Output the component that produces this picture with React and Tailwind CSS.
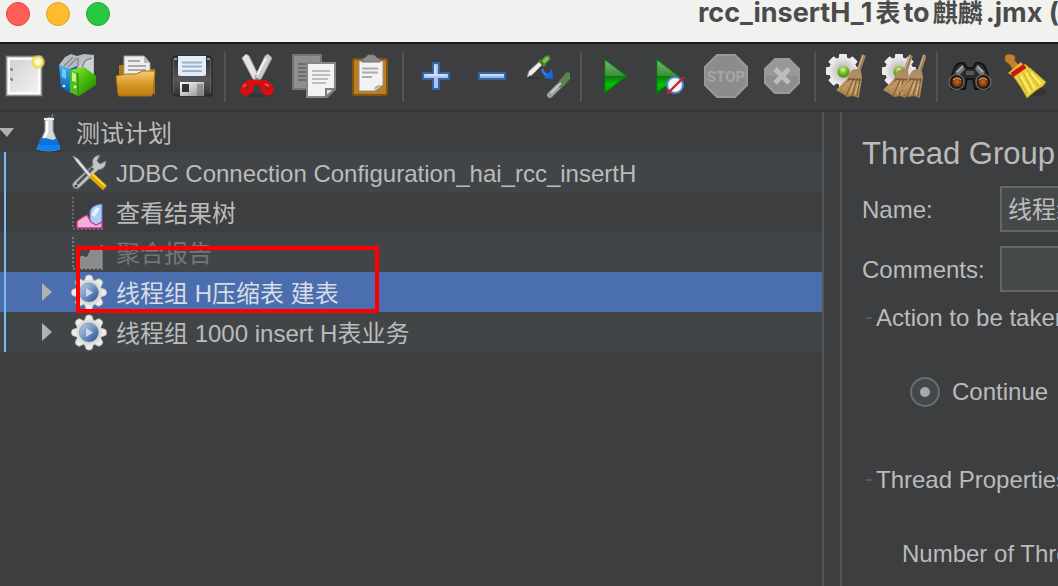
import React from "react";

const GEAR_TEETH = [0, 45, 90, 135, 180, 225, 270, 315];

function Svg({ size = 44, children }) {
  return (
    <svg width={size} height={size} viewBox={`0 0 ${size} ${size}`} aria-hidden="true" className="block shrink-0">
      {children}
    </svg>
  );
}

function Gradients() {
  return (
    <svg width="0" height="0" className="absolute" aria-hidden="true">
      <defs>
        <linearGradient id="paper" x1="0" y1="0" x2="1" y2="1">
          <stop offset="0" stopColor="#d2d2d2" />
          <stop offset="1" stopColor="#f2f2f2" />
        </linearGradient>
        <linearGradient id="gold" x1="0" y1="0" x2="0" y2="1">
          <stop offset="0" stopColor="#f3cc72" />
          <stop offset="0.5" stopColor="#d99b2c" />
          <stop offset="1" stopColor="#bd7a0a" />
        </linearGradient>
        <linearGradient id="disk" x1="0" y1="0" x2="0" y2="1">
          <stop offset="0" stopColor="#2e2e30" />
          <stop offset="0.6" stopColor="#58585a" />
          <stop offset="1" stopColor="#303032" />
        </linearGradient>
        <linearGradient id="metal" x1="0" y1="0" x2="1" y2="1">
          <stop offset="0" stopColor="#ffffff" />
          <stop offset="1" stopColor="#8c8c88" />
        </linearGradient>
        <linearGradient id="play" x1="0" y1="0" x2="0" y2="1">
          <stop offset="0" stopColor="#7ab87a" />
          <stop offset="0.48" stopColor="#3c8f3c" />
          <stop offset="0.5" stopColor="#0a7a0a" />
          <stop offset="0.75" stopColor="#04c404" />
          <stop offset="1" stopColor="#089208" />
        </linearGradient>
        <linearGradient id="straw" x1="0" y1="0" x2="0" y2="1">
          <stop offset="0" stopColor="#a88a68" />
          <stop offset="0.6" stopColor="#be955e" />
          <stop offset="1" stopColor="#a27b49" />
        </linearGradient>
        <radialGradient id="gear">
          <stop offset="0" stopColor="#a8a8a8" />
          <stop offset="0.6" stopColor="#d2d2d2" />
          <stop offset="1" stopColor="#ececec" />
        </radialGradient>
        <radialGradient id="greenBall" cx="0.45" cy="0.3">
          <stop offset="0" stopColor="#dcf5a6" />
          <stop offset="0.6" stopColor="#7fc32c" />
          <stop offset="1" stopColor="#5a9a1c" />
        </radialGradient>
        <linearGradient id="blueBall" x1="0" y1="0" x2="1" y2="1">
          <stop offset="0" stopColor="#c4d4e8" />
          <stop offset="0.5" stopColor="#6f93c6" />
          <stop offset="1" stopColor="#1d4684" />
        </linearGradient>
        <radialGradient id="lens">
          <stop offset="0" stopColor="#c26a2c" />
          <stop offset="0.6" stopColor="#8a4010" />
          <stop offset="1" stopColor="#2c1408" />
        </radialGradient>
        <linearGradient id="greenBook" x1="0" y1="0" x2="1" y2="1">
          <stop offset="0" stopColor="#9bec3a" />
          <stop offset="0.5" stopColor="#48bc0c" />
          <stop offset="1" stopColor="#1c7a00" />
        </linearGradient>
        <linearGradient id="blueBook" x1="0" y1="0" x2="0" y2="1">
          <stop offset="0" stopColor="#3fb0f5" />
          <stop offset="1" stopColor="#0c5fae" />
        </linearGradient>
        <radialGradient id="spark">
          <stop offset="0" stopColor="#ffffff" />
          <stop offset="0.4" stopColor="#fbf6b0" />
          <stop offset="0.75" stopColor="#e6d84a" stopOpacity="0.9" />
          <stop offset="1" stopColor="#e6d84a" stopOpacity="0" />
        </radialGradient>
      </defs>
    </svg>
  );
}

function NewIcon() {
  return (
    <Svg>
      <rect x="4.5" y="2.5" width="35" height="39" fill="#fdfdfd" stroke="#8d8d88" strokeWidth="1.6" />
      <rect x="8" y="6" width="28" height="32" fill="url(#paper)" />
      <path d="M8 15h2v2M8 25h2v2" stroke="#777" strokeWidth="1.5" fill="none" />
      <circle cx="36" cy="8" r="7.5" fill="url(#spark)" />
    </Svg>
  );
}

function TemplatesIcon() {
  return (
    <Svg>
      <path d="M1 11 7 3l6-3 6 2 7-2 10 1v22l-15 4L8 15z" fill="#b9bcbe" />
      <path d="m6 12 9-9m-5 10 9-9m1 10V4m4 10 9-11m-5 12 7-8" stroke="#8a8e91" strokeWidth="1.6" />
      <path d="m20 13 8-9 7-2v20l-10-6z" fill="#cfd2d4" />
      <path d="M24 13c2-7 5-8 10-9" stroke="#8d9296" strokeWidth="2" fill="none" />
      <path d="m1 11 11 4v24L3 33z" fill="url(#blueBook)" />
      <path d="m4 14 4 2v9l-4-2z" fill="#73c8f6" />
      <path d="m12 15 7-3v25l-7 3z" fill="#1160a0" />
      <circle cx="6" cy="32" r="1.3" fill="#d8f0ff" />
      <path d="m12 16 14-3 12 9v9L21 42l-9-4z" fill="url(#greenBook)" />
      <path d="m12 16 8 3v23l-8-4z" fill="#51be18" />
      <path d="m14 18 4 2v8l-4-1z" fill="#c4f789" />
      <path d="M20 19v22" stroke="#227d06" strokeWidth="1" />
      <circle cx="17" cy="33" r="1.4" fill="#d9ffc0" />
    </Svg>
  );
}

function OpenIcon() {
  return (
    <Svg>
      <path d="M5 11h9l3 4h24v25H5z" fill="#b0780f" />
      <path d="M10 2h20l6 7v14H10z" fill="#eeeeef" stroke="#a1a1a4" strokeWidth="1" />
      <path d="M30 2v7h6z" fill="#b8b8ba" />
      <path d="M14 7h12M14 12h18M14 16h18" stroke="#aaa" strokeWidth="2" />
      <path d="M2 22q12-3 20-2l7-3h12l-2 23-2 2H5l-1-2z" fill="url(#gold)" stroke="#a96f0d" strokeWidth="1" />
    </Svg>
  );
}

function SaveIcon() {
  return (
    <Svg>
      <path d="M4 2h36l2 2v38H5l-3-3V4z" fill="url(#disk)" stroke="#242426" strokeWidth="1" />
      <path d="M3.5 5v34M40.5 5v34" stroke="#5c5c5f" strokeWidth="1" />
      <path d="M8 2h28v18q0 2-2 2H10q-2 0-2-2z" fill="#e4eef7" />
      <path d="M12 8.500h20M12 12.500h20M12 17h20" stroke="#98b4d0" strokeWidth="1.8" />
      <rect x="10" y="28" width="24" height="14" fill="url(#metal)" />
      <rect x="12" y="30" width="7" height="8" fill="#343436" />
      <path d="M27 30h6v12h-6z" fill="#777" opacity=".6" />
      <path d="M4 4h3v2H4zM37 4h3v2h-3z" fill="#999" />
    </Svg>
  );
}

function CutIcon() {
  return (
    <Svg>
      <ellipse cx="21" cy="41" rx="14" ry="2" fill="#2c2d2e" opacity=".5" />
      <path d="m6 4 4-4 3 2 10 21-2 5-4-3z" fill="#e4e4e4" stroke="#a5a5a5" strokeWidth="1" />
      <path d="m36 4-4-4-3 2-10 21 2 5 4-3z" fill="#cccccd" stroke="#9c9c9c" strokeWidth="1" />
      <path d="m30 4-9 17" stroke="#f4f4f4" strokeWidth="2" />
      <g fill="none" stroke="#d90f0f" strokeWidth="5.5">
        <ellipse cx="11" cy="34.500" rx="3.500" ry="5" transform="rotate(38 11 34.5)" />
        <ellipse cx="31" cy="34.500" rx="3.500" ry="5" transform="rotate(-38 31 34.5)" />
        <path d="m11 29 10-1 10 1" />
      </g>
      <path d="m7 33 3-3m19 0 4 2" stroke="#ff5656" strokeWidth="1.5" />
      <circle cx="21" cy="25" r="1.3" fill="#777" />
    </Svg>
  );
}

function CopyIcon() {
  return (
    <Svg>
      <rect x="1" y="1" width="28" height="34" fill="#8e9090" stroke="#737575" strokeWidth="2" />
      <path d="M6 10h16M6 14h16M6 18h16M6 22h10M6 26h10" stroke="#6d6f6f" strokeWidth="1.8" />
      <path d="M15 9h28v26l-8 8H15z" fill="#f3f3f3" stroke="#858782" strokeWidth="2" />
      <path d="M20 17h18M20 21h18M20 25h16M20 29h14" stroke="#bdbdbd" strokeWidth="1.8" />
      <path d="M34 43v-8h9z" fill="#d9d9d9" stroke="#7b7d78" strokeWidth="2" />
    </Svg>
  );
}

function PasteIcon() {
  return (
    <Svg>
      <rect x="5" y="5" width="34" height="36" rx="1" fill="#bd7e22" stroke="#805315" strokeWidth="2" />
      <path d="M11 7h24v24l-8 6H11z" fill="#f2f2f2" stroke="#8f8f8b" strokeWidth="1" />
      <path d="M14 14.500h16M14 18.500h16M14 23h10" stroke="#acacac" strokeWidth="1.800" />
      <path d="M26 36q0-5 8-5z" fill="#aaa" />
      <path d="M14 8V6q0-2 3-2l3-3h6l3 3q3 0 3 2v2z" fill="#8d8d83" stroke="#72726a" strokeWidth="1" />
    </Svg>
  );
}

function PlusIcon() {
  return (
    <Svg>
      <path d="M19 9h6v10h10v6H25v10h-6V25H9v-6h10z" fill="#adc5e8" stroke="#3465a8" strokeWidth="2" />
      <path d="M20 11h2v11H11v-2h9zM22 22h11v-2H22z" fill="#d3e0f3" />
    </Svg>
  );
}

function MinusIcon() {
  return (
    <Svg>
      <path d="M9 19h26v6H9z" fill="#9ebbe3" stroke="#3465a8" strokeWidth="2" />
      <path d="M10 21h24" stroke="#cbdcf2" strokeWidth="2" />
    </Svg>
  );
}

function ToggleIcon() {
  return (
    <Svg>
      <path d="M3 24h10" stroke="#29292a" strokeWidth="1.500" opacity=".6" />
      <path d="m1 23 2-6L14 7l3 3L6 21z" fill="#efefeb" stroke="#8c8c88" strokeWidth="1" />
      <path d="m14 8 6-6 3 0 1 3-7 7z" fill="#80be60" stroke="#467b2c" strokeWidth="1.3" />
      <path d="m13 6 6 6" stroke="#42822b" strokeWidth="3" />
      <path d="M16 15q2 6 6 6" stroke="#387ce9" strokeWidth="2.400" fill="none" />
      <path d="m26 15 1 10-9-1z" fill="#1766f4" />
      <g opacity=".8">
        <path d="m24 41 12-12" stroke="#b4b6b5" strokeWidth="6" strokeLinecap="round" />
        <path d="m35 30 7-8" stroke="#659650" strokeWidth="7" strokeLinecap="round" />
        <path d="m25 39 10-10" stroke="#eee" strokeWidth="2" />
      </g>
    </Svg>
  );
}

function StartIcon() {
  return (
    <Svg>
      <path d="M12.500 5 35 22 12.500 39.500z" fill="url(#play)" stroke="#116b11" strokeWidth="1.500" />
    </Svg>
  );
}

function StartNoTimersIcon() {
  return (
    <Svg>
      <path d="M8.500 5 31 22 8.500 39.500z" fill="url(#play)" stroke="#116b11" strokeWidth="1.500" />
      <circle cx="27" cy="31" r="8" fill="#f1f4f8" stroke="#4c86c6" strokeWidth="2" />
      <path d="M19 40 36 23" stroke="#cf1f26" strokeWidth="2.400" />
    </Svg>
  );
}

function StopIcon() {
  return (
    <Svg>
      <path d="M13 1h18l12 12v18L31 43H13L1 31V13z" fill="#8c8c8c" stroke="#999" strokeWidth="2" />
      <text x="22" y="28" textAnchor="middle" fill="#a6a6a6" fontSize="15" fontWeight="700" fontFamily="Roboto, sans-serif">
        STOP
      </text>
    </Svg>
  );
}

function ShutdownIcon() {
  return (
    <Svg>
      <path d="M15 5h14l10 10v14L29 39H15L5 29V15z" fill="#8e8e8e" stroke="#9a9a9a" strokeWidth="2" />
      <path d="M6 22V15l9-9h14l9 9v7z" fill="#9c9c9c" opacity=".7" />
      <path d="m15 15 14 14M29 15 15 29" stroke="#bdbdbd" strokeWidth="5" />
    </Svg>
  );
}

function Cog({ cx, cy, r }) {
  return (
    <g>
      {GEAR_TEETH.map((a) => (
        <rect key={a} x={cx - 4} y={cy - r} width="8" height="8" rx="1" fill="#ececec" transform={`rotate(${a} ${cx} ${cy})`} />
      ))}
      <circle cx={cx} cy={cy} r={r - 3} fill="url(#gear)" />
    </g>
  );
}

function Besom() {
  return (
    <g>
      <path d="m38 1-7 20" stroke="#9d805b" strokeWidth="4" />
      <path d="m37 1-6 17" stroke="#cbb08a" strokeWidth="1.200" />
      <path d="M25 17q5-4 10 0l1 7-2 12-1 8-6-2-6 1-4-3-7-4 5-5 5-5z" fill="url(#straw)" />
      <path d="M24 24 15 37m13-13-8 18m11-18-5 18m8-18-3 18" stroke="#775638" strokeWidth="1" />
      <path d="m22 25 13 1" stroke="#7b5b3c" strokeWidth="1.500" />
      <path d="m22 28-6 8m12-8-4 12m8-10-3 11" stroke="#dcb57c" strokeWidth="1" />
    </g>
  );
}

function ClearIcon() {
  return (
    <Svg>
      <Cog cx={17} cy={17} r={17} />
      <circle cx="17.500" cy="18" r="6" fill="url(#greenBall)" />
      <Besom />
    </Svg>
  );
}

function ClearAllIcon() {
  return (
    <Svg>
      <Cog cx={17} cy={17} r={17} />
      <circle cx="17.500" cy="18" r="6" fill="url(#greenBall)" />
      <g transform="translate(-9 0)">
        <Besom />
      </g>
      <g transform="translate(5 0)">
        <Besom />
      </g>
    </Svg>
  );
}

function SearchIcon() {
  return (
    <Svg>
      <path d="m1 28 6-15q3-5 9-4l3 5h6l3-5q6-1 9 4l6 15-3 7H27l-2-10h-6l-2 10H4z" fill="#292a2c" stroke="#0d0d0e" strokeWidth="1.500" />
      <path d="m7 18 7-7 3 4-7 8zM37 18l-7-7-3 4 7 8z" fill="#74777c" />
      <path d="m9 18 6-6M35 18l-6-6" stroke="#b2b6ba" strokeWidth="1.300" />
      <path d="M18 17h8v4h-8z" fill="#55585b" />
      <circle cx="8.500" cy="28" r="7.500" fill="#1b1b1c" stroke="#6f7274" strokeWidth="1.200" />
      <circle cx="35.500" cy="28" r="7.500" fill="#1b1b1c" stroke="#6f7274" strokeWidth="1.200" />
      <circle cx="9" cy="28" r="6" fill="url(#lens)" />
      <circle cx="35" cy="28" r="6" fill="url(#lens)" />
      <path d="M5 26q4-4 8 0M31 26q4-4 8 0" stroke="#e2ab83" strokeWidth="1" fill="none" />
    </Svg>
  );
}

function ResetSearchIcon() {
  return (
    <Svg>
      <ellipse cx="31" cy="38" rx="12" ry="4" fill="#29292a" opacity=".5" />
      <path d="m9 18 12-8 8 7 13 11-3 4-5 3-4 3-7 6q-6-12-14-22z" fill="#ead341" stroke="#aa8e13" strokeWidth="1" />
      <path d="m14 21 9 19m-4-22 9 18m-5-20 11 16m-8-18 12 11" stroke="#c9ae22" strokeWidth="1" />
      <path d="m17 22 9 16m-4-19 9 16m-4-16 10 11" stroke="#fff47c" strokeWidth="1.500" />
      <path d="M1 2q4-4 10 0v5l4 4-6 5-4-6-4-3z" fill="#c47f32" stroke="#884f15" strokeWidth="1" />
      <path d="m4 19 13-11 3 4-13 9z" fill="#e1bd28" />
      <path d="m8 21 13-9" stroke="#cd1517" strokeWidth="5" />
    </Svg>
  );
}

function FlaskIcon() {
  return (
    <Svg size={40}>
      <path d="m23 8 2-6" stroke="#707376" strokeWidth="2" />
      <ellipse cx="21" cy="38" rx="12" ry="2" fill="#253140" />
      <path d="M17 7q4-3 8 0v12l7 18q-11 4-23 0l8-18z" fill="#d6d9dc" stroke="#969a9d" strokeWidth="1" />
      <path d="M12 27q4-2 9 0t8-1l3 11q-11 4-23 0z" fill="#0873dc" />
      <path d="M10 33h22l0 4q-11 3-22 0z" fill="#1181f2" />
      <path d="M19 9v11l-3 6" stroke="#fff" strokeWidth="2.500" fill="none" />
      <path d="M16 7h10" stroke="#eee" strokeWidth="2" />
    </Svg>
  );
}

function ToolsIcon() {
  return (
    <Svg size={40}>
      <path d="M6 36q-3-3 0-6L25 13q-2-6 3-9l4-1-3 6 3 3 6-3q0 8-8 9L12 35q-3 3-6 1z" fill="#c2c3c3" stroke="#777978" strokeWidth="1" />
      <path d="m9 32 16-16" stroke="#505355" strokeWidth="3" />
      <circle cx="8" cy="34" r="1.500" fill="#3d3e40" />
      <path d="m5 4 5 3 14 17-2 2L8 9z" fill="#e4e4e4" stroke="#8e8f8f" strokeWidth="1" />
      <path d="m23 23 14 13" stroke="#e0a50c" strokeWidth="6" />
      <path d="m24 22 13 12" stroke="#ffd332" strokeWidth="2" />
    </Svg>
  );
}

function ChartIcon({ disabled }) {
  return (
    <Svg size={40}>
      <path d="M5 5v32h32" fill="none" stroke={disabled ? "#88898a" : "#77797a"} strokeWidth="1.500" strokeDasharray="2 2" />
      {!disabled && <path d="M22 30V19q2-6 12-7v23l-8-2z" fill="#abcdf6" stroke="#527ebe" strokeWidth="1" />}
      {!disabled && <path d="m25 24 5-8" stroke="#e7f3ff" strokeWidth="4" />}
      {disabled ? (
        <path d="M9 36V28l5-4 5 2 4-8 6-1 5-4v23z" fill="#898b8c" stroke="#979899" strokeWidth="1" />
      ) : (
        <path d="m9 36v-7l6-4 4-2 4 7 5 3 6-3v6z" fill="#edb2dc" stroke="#c6348a" strokeWidth="1.300" />
      )}
    </Svg>
  );
}

function ThreadGroupIcon() {
  return (
    <Svg size={40}>
      {GEAR_TEETH.map((a) => (
        <path key={a} d="M16 10l2-6 2-1h2l2 1 2 6z" fill="#ededeb" stroke="#b1b1ae" strokeWidth=".8" transform={`rotate(${a} 21 20.500)`} />
      ))}
      <circle cx="21" cy="20.500" r="13" fill="#dededb" />
      <circle cx="21" cy="20.500" r="9.500" fill="url(#blueBall)" stroke="#8997ab" strokeWidth="1" />
      <path d="m18 16 7 4.500-7 4.500z" fill="#cbd8ec" />
    </Svg>
  );
}

const TOOLBAR = [
  [["New", NewIcon], ["Templates", TemplatesIcon], ["Open", OpenIcon], ["Save", SaveIcon]],
  [["Cut", CutIcon], ["Copy", CopyIcon], ["Paste", PasteIcon]],
  [["Expand all", PlusIcon], ["Collapse all", MinusIcon], ["Toggle", ToggleIcon]],
  [["Start", StartIcon], ["Start no pauses", StartNoTimersIcon], ["Stop", StopIcon, true], ["Shutdown", ShutdownIcon, true]],
  [["Clear", ClearIcon], ["Clear all", ClearAllIcon]],
  [["Search", SearchIcon], ["Reset search", ResetSearchIcon]],
];

const NODES = [
  { label: "JDBC Connection Configuration_hai_rcc_insertH", Icon: ToolsIcon },
  { label: "查看结果树", Icon: ChartIcon },
  { label: "聚合报告", Icon: ChartIcon, disabled: true },
  { label: "线程组 H压缩表 建表", Icon: ThreadGroupIcon, branch: true, selected: true },
  { label: "线程组 1000 insert H表业务", Icon: ThreadGroupIcon, branch: true },
];

function rowColors(index, { selected, disabled }) {
  if (selected) return "bg-[#4b6eaf] text-[#d8dce4]";
  if (disabled) return "bg-[#414547] text-[#747677]";
  return index % 2 === 0 ? "bg-[#414547]" : "";
}

function TitleBar() {
  return (
    <header className="flex h-[42px] shrink-0 overflow-hidden bg-[#f1f1ef]">
      <div className="flex shrink-0 gap-4 pl-1.5 pt-0.5">
        <button aria-label="Close" className="size-6 rounded-full border border-[#e0443e] bg-[#ff5f57]" />
        <button aria-label="Minimize" className="size-6 rounded-full border border-[#dea123] bg-[#febc2e]" />
        <button aria-label="Zoom" className="size-6 rounded-full border border-[#1aab29] bg-[#28c840]" />
      </div>
      <h1 className="ml-auto flex w-[360px] shrink-0 items-baseline gap-[3px] whitespace-nowrap font-[family-name:'Inter','Noto_Sans_CJK_SC',sans-serif] text-[27px] font-bold leading-[26px] text-[#4b4b4b]">
        <span>rcc_insertH_1</span>
        <span className="text-[25px]">表</span>
        <span>to</span>
        <span className="text-[25px]">麒麟</span>
        <span>.jmx (</span>
      </h1>
    </header>
  );
}

function Toolbar() {
  return (
    <div role="toolbar" aria-label="Main" className="flex h-[70px] shrink-0 gap-2.5 overflow-hidden border-b-2 border-t-2 border-b-[#353638] border-t-[#1c1c1d] pl-0.5 pt-2.5">
      {TOOLBAR.map((group, i) => (
        <React.Fragment key={i}>
          {i > 0 && <div role="separator" className="-mt-0.5 h-[50px] w-0.5 shrink-0 bg-[#525355]" />}
          <div className="flex shrink-0 gap-3">
            {group.map(([label, Icon, disabled]) => (
              <button key={label} aria-label={label} disabled={disabled} className="size-11">
                <Icon />
              </button>
            ))}
          </div>
        </React.Fragment>
      ))}
    </div>
  );
}

function Arrow({ open }) {
  return (
    <svg width="14" height="20" viewBox="0 0 14 20" aria-hidden="true" className="block">
      <path d={open ? "M-1 6h15l-7 9z" : "M2 1v18l10-9z"} fill="#b0b1b2" />
    </svg>
  );
}

function Tree() {
  return (
    <nav aria-label="Test plan" className="min-w-0 overflow-hidden border-r-2 border-[#555658]">
      <ul>
        <li>
          <div className="flex h-10 items-center">
            <button aria-label="Collapse" className="mr-3.5 w-3.5 shrink-0">
              <Arrow open />
            </button>
            <FlaskIcon />
            <span className="ml-2 whitespace-nowrap pt-1">测试计划</span>
          </div>
          <ul className="relative">
            {NODES.map((node, i) => (
              <li key={node.label} className={`relative flex h-10 items-center pl-10 ${rowColors(i, node)}`}>
                <div className="mr-3.5 w-3.5 shrink-0">
                  {node.branch && (
                    <button aria-label="Expand" className="block">
                      <Arrow />
                    </button>
                  )}
                </div>
                <node.Icon disabled={node.disabled} />
                <span className="ml-2 whitespace-nowrap pt-1">{node.label}</span>
                {node.selected && <div className="absolute -top-[26px] left-[76px] z-10 h-[67px] w-[303px] border-4 border-[#ff0000]" />}
              </li>
            ))}
            <li aria-hidden="true" className="absolute inset-y-0 left-1 w-0.5 bg-[#78bbf5]" />
          </ul>
        </li>
      </ul>
    </nav>
  );
}

function Legend({ children }) {
  return (
    <legend className="flex h-8 items-center gap-1 whitespace-nowrap pl-1">
      <span aria-hidden="true" className="h-0.5 w-1.5 bg-[#555759]" />
      {children}
    </legend>
  );
}

function Field({ id, label, value }) {
  return (
    <div className="mb-3.5 flex items-center">
      <label htmlFor={id} className="w-[138px] shrink-0 pt-0.5">{label}</label>
      <input
        id={id}
        defaultValue={value}
        className="h-[46px] w-[420px] shrink-0 border-2 border-[#646667] bg-[#45494a] px-1.5 pb-1 text-[#bbbbbb] outline-none"
      />
    </div>
  );
}

function Editor() {
  return (
    <main className="ml-4 min-w-0 overflow-hidden whitespace-nowrap border-l-2 border-[#555658] pl-5 pt-5">
      <h2 className="h-[54px] text-[31px] leading-[44px]">Thread Group</h2>
      <form>
        <Field id="name" label="Name:" value="线程组 H压缩表 建表" />
        <Field id="comments" label="Comments:" />
        <fieldset className="-mt-1">
          <Legend>Action to be taken</Legend>
          <div className="flex items-center gap-3 pb-[54px] pl-12 pt-10">
            <input
              id="continue"
              type="radio"
              name="on-error"
              defaultChecked
              className="grid size-[30px] shrink-0 appearance-none place-items-center rounded-full border-2 border-[#6b6e6f] bg-[#43494b] before:size-2.5 before:rounded-full before:bg-[#a9a9a9]"
            />
            <label htmlFor="continue">Continue</label>
          </div>
        </fieldset>
        <fieldset>
          <Legend>Thread Properties</Legend>
          <div className="flex items-center pl-10 pt-9">
            <label htmlFor="threads" className="shrink-0">Number of Threads</label>
            <input id="threads" className="ml-4 h-11 w-[200px] shrink-0 border-2 border-[#646667] bg-[#45494a]" />
          </div>
        </fieldset>
      </form>
    </main>
  );
}

export default function App() {
  return (
    <div className="flex h-screen flex-col overflow-hidden bg-[#3d3e40] font-[family-name:'Liberation_Sans','Noto_Sans_CJK_SC',sans-serif] text-[24px] leading-9 text-[#bbbbbb]">
      <Gradients />
      <TitleBar />
      <Toolbar />
      <div className="grid min-h-0 flex-1 grid-cols-[824fr_234fr]">
        <Tree />
        <Editor />
      </div>
    </div>
  );
}
